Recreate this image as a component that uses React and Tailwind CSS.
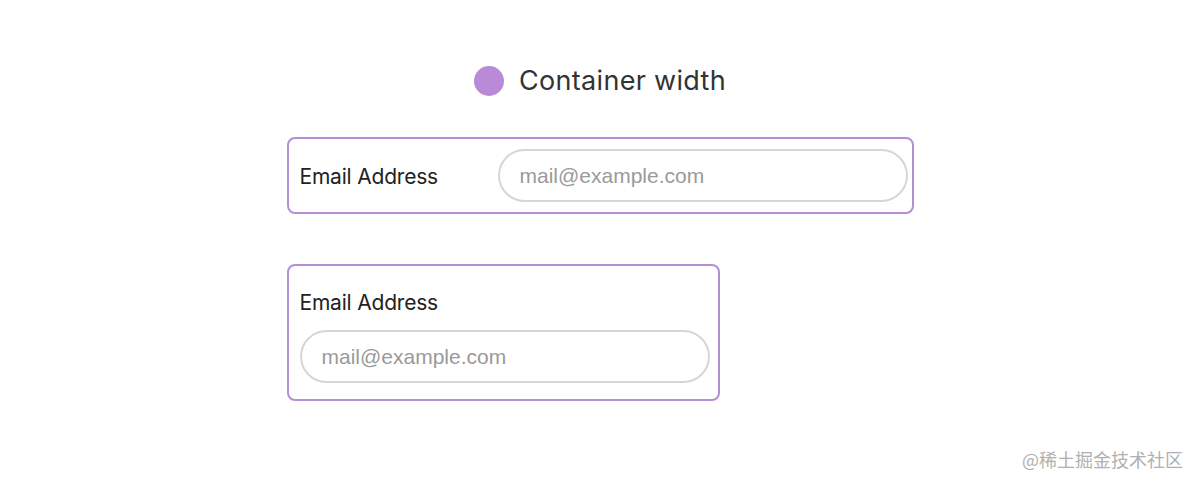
import React from 'react';

const EmailField = ({ stacked }) => {
  return (
    <div
      className={
        stacked
          ? 'w-[433px] border-2 border-[#b58fd5] rounded-[8px] pl-[11px] pr-[8px] pt-[23px] pb-[16px] bg-white'
          : 'w-[627px] border-2 border-[#b58fd5] rounded-[8px] pl-[11px] pr-[4px] py-[10px] flex items-center bg-white'
      }
    >
      <label
        className={
          stacked
            ? "block text-[21px] leading-[28px] text-[#222] font-['Inter',sans-serif] mb-[13px] tracking-[-0.2px]"
            : "block w-[198px] shrink-0 pt-[3px] text-[21px] leading-[28px] text-[#222] font-['Inter',sans-serif] tracking-[-0.2px]"
        }
      >
        Email Address
      </label>
      <input
        type="text"
        placeholder="mail@example.com"
        className="w-full h-[53px] rounded-full border-2 border-[#d6d6d6] px-[20px] text-[21px] font-['Liberation_Sans',sans-serif] placeholder:text-[#9a9a9a] outline-none bg-white"
      />
    </div>
  );
};

export default function App() {
  return (
    <div className="relative w-[1200px] h-[486px] bg-white overflow-hidden">
      <div className="flex flex-col items-center pt-[65px]">
        <div className="flex items-center gap-[15px] h-[32px]">
          <span className="w-[30px] h-[30px] rounded-full bg-[#b88ad8]" />
          <span className="text-[27px] text-[#333] font-['Inter',sans-serif] tracking-[0.3px]">Container width</span>
        </div>
        <div className="w-[627px] mt-[40px] flex flex-col gap-[50px]">
          <EmailField />
          <EmailField stacked />
        </div>
      </div>
      <div className="absolute right-[17px] bottom-[15px] text-[18px] text-[#b0b0b0] font-['Noto_Sans_CJK_SC',sans-serif] leading-[24px]">
        @稀土掘金技术社区
      </div>
    </div>
  );
}
